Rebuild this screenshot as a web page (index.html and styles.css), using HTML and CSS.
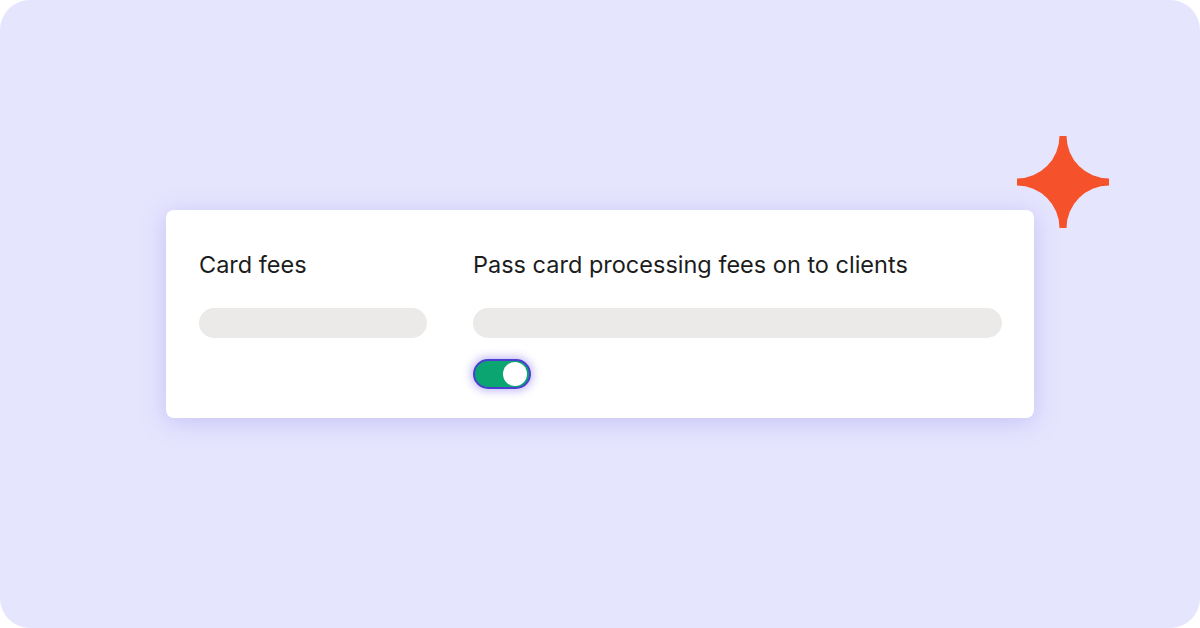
FILE: index.html
```html
<!DOCTYPE html>
<html>
<head>
<meta charset="utf-8">
<link rel="stylesheet" href="styles.css">
</head>
<body>
<div class="canvas">
  <div class="card">
    <div class="col col-left">
      <div class="label">Card fees</div>
      <div class="bar"></div>
    </div>
    <div class="col col-right">
      <div class="label">Pass card processing fees on to clients</div>
      <div class="bar"></div>
      <div class="toggle"><span class="knob"></span></div>
    </div>
  </div>
  <svg class="star" width="92" height="92" viewBox="0 0 92 92">
    <path d="M42.5 0 H49.5 A42.5 42.5 0 0 0 92 42.5 V49.5 A42.5 42.5 0 0 0 49.5 92 H42.5 A42.5 42.5 0 0 0 0 49.5 V42.5 A42.5 42.5 0 0 0 42.5 0 Z" fill="#f5522b"/>
  </svg>
</div>
</body>
</html>
```
FILE: styles.css
```css
html, body {
  margin: 0;
  padding: 0;
  background: #ffffff;
}
.canvas {
  position: relative;
  width: 1200px;
  height: 628px;
  background: #e6e5fe;
  border-radius: 30px;
  display: flex;
  align-items: flex-start;
  padding: 210px 0 0 166px;
  box-sizing: border-box;
  font-family: Inter, "Noto Sans", sans-serif;
}
.card {
  width: 868px;
  height: 208px;
  box-sizing: border-box;
  background: #ffffff;
  border-radius: 8px;
  box-shadow: 0 4px 24px rgba(140, 130, 230, 0.35);
  display: flex;
  gap: 46px;
  padding: 41px 32px 0 33px;
}
.col {
  display: flex;
  flex-direction: column;
}
.col-left { width: 228px; }
.col-right { flex: 1; }
.label {
  font-size: 23.5px;
  line-height: 28px;
  color: #1c1c1c;
  letter-spacing: 0;
}
.bar {
  height: 30px;
  margin-top: 29px;
  border-radius: 15px;
  background: #ebeae8;
}
.toggle {
  margin-top: 21px;
  width: 58px;
  height: 30px;
  box-sizing: border-box;
  border: 2px solid #4a3fcf;
  border-radius: 15px;
  background: #0ba572;
  box-shadow: 0 0 8px 2px rgba(120, 100, 240, 0.45);
  display: flex;
  align-items: center;
  justify-content: flex-end;
  padding-right: 2px;
}
.knob {
  width: 24px;
  height: 24px;
  border-radius: 50%;
  background: #ffffff;
}
.star {
  position: absolute;
  left: 1017px;
  top: 136px;
}
```
